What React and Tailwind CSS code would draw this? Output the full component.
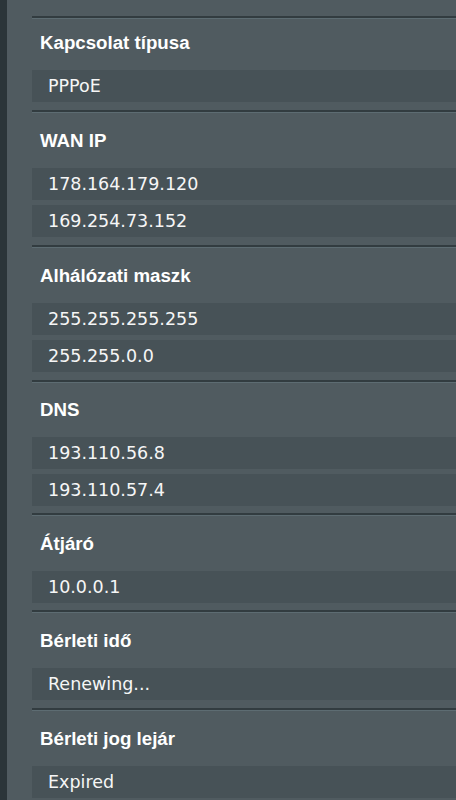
const sections = [
  { title: "Kapcsolat típusa", values: ["PPPoE"], top: "pt-[13px]", bottom: "pb-2" },
  { title: "WAN IP", values: ["178.164.179.120", "169.254.73.152"], top: "pt-[17px]", bottom: "pb-2" },
  { title: "Alhálózati maszk", values: ["255.255.255.255", "255.255.0.0"], top: "pt-[17px]", bottom: "pb-2" },
  { title: "DNS", values: ["193.110.56.8", "193.110.57.4"], top: "pt-[16px]", bottom: "pb-[7px]" },
  { title: "Átjáró", values: ["10.0.0.1"], top: "pt-[17px]", bottom: "pb-[7px]" },
  { title: "Bérleti idő", values: ["Renewing..."], top: "pt-[17px]", bottom: "pb-2" },
  { title: "Bérleti jog lejár", values: ["Expired"], top: "pt-[17px]", bottom: "pb-2" },
];

const Section = ({ title, values, top, bottom }) => {
  return (
    <div className="border-t-2 border-[#323c40]">
      <div className={`border-t border-[#5d6c72] ${top} ${bottom}`}>
        <div className="px-2 font-['Liberation_Sans',Arial,sans-serif] text-[18.7px] font-bold leading-[21px] text-white">
          {title}
        </div>
        <div className="mt-[17px] flex flex-col gap-[5px]">
          {values.map((value, index) => (
            <div
              key={index}
              className="flex h-8 items-center bg-[#475257] pl-4 font-['DejaVu_Sans',Verdana,sans-serif] text-[17.5px] text-[#f6f6f6]"
            >
              {value}
            </div>
          ))}
        </div>
      </div>
    </div>
  );
};

const App = () => {
  return (
    <div className="flex min-h-[800px] overflow-hidden bg-[#505b60]">
      <div className="w-[7px] shrink-0 bg-[#2b3539]" />
      <div className="flex-1 pl-[25px] pt-4">
        {sections.map((section) => (
          <Section
            key={section.title}
            title={section.title}
            values={section.values}
            top={section.top}
            bottom={section.bottom}
          />
        ))}
      </div>
    </div>
  );
};

export default App;
